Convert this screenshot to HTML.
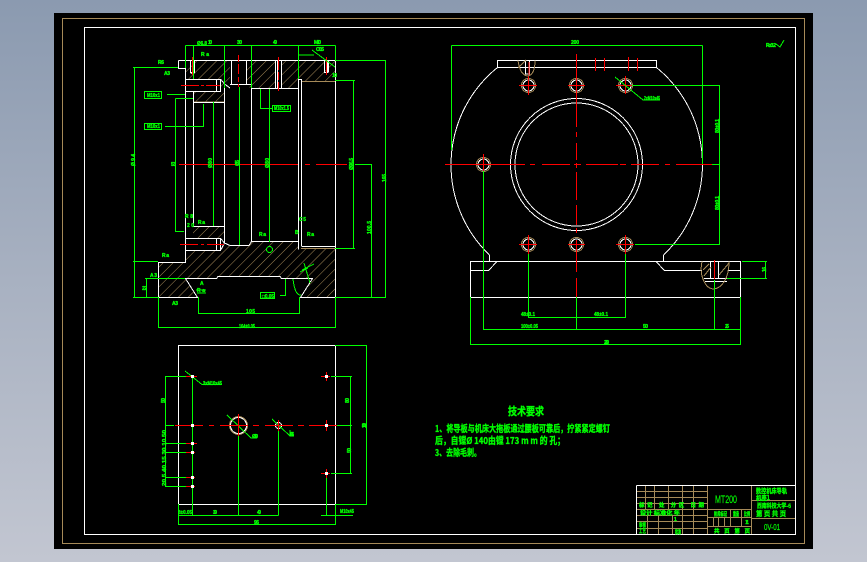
<!DOCTYPE html>
<html><head><meta charset="utf-8">
<style>
html,body{margin:0;padding:0;width:867px;height:562px;overflow:hidden;background:linear-gradient(180deg,#8b9ab0 0%,#a8b1c1 50%,#c2c6d1 100%)}
svg{position:absolute;left:0;top:0}
.g{stroke:#0f0;fill:none;stroke-width:1}
.w{stroke:#fff;fill:none;stroke-width:1}
.r{stroke:#f00;fill:none;stroke-width:1}
.b{stroke:#a68a58;fill:none;stroke-width:1}
text{font-family:"Liberation Sans","Noto Sans CJK SC",sans-serif;fill:#0f0;stroke:#0f0;stroke-width:.35;font-weight:bold;font-size:5px}
.c{font-family:"Noto Sans CJK SC","WenQuanYi Zen Hei",sans-serif;font-weight:bold}
</style></head><body>
<svg width="867" height="562" viewBox="0 0 867 562" shape-rendering="crispEdges">
<defs>
<pattern id="h" width="7" height="7" patternUnits="userSpaceOnUse" patternTransform="rotate(45)">
<line x1="0" y1="0" x2="0" y2="7" stroke="#a68a58" stroke-width="1"/>
</pattern>
</defs>
<rect x="54" y="13" width="759" height="536" fill="#000"/>
<rect x="62.5" y="18.5" width="742" height="525" class="b"/>
<rect x="84.5" y="27.5" width="711" height="507" class="w"/>

<!-- hatch -->
<g fill="url(#h)" stroke="none">
<polygon points="185,68 196,60 230,60 230,84 224,88 224,102 193,102 193,92 220,92 220,79 185,79"/>
<polygon points="247,60 276,60 276,89 251,89 247,84"/>
<polygon points="282,60 335,60 335,81 301,81 301,79 298,79 298,89 282,89"/>
<polygon points="193,238 193,227 224,227 224,238"/>
<polygon points="159,262 185,262 185,250 220,250 224,243 230,246 249,246 252,241 298,241 298,249 335,249 335,297 301,297 312,279 281,279 280,276 218,276 216,279 185,279 197,297 159,297"/>
</g>
<g class="b">
<path d="M185 79.500H216M185 91.500H220M193 102H224M185 238.500H220M185 250.500H220M301 81.500H335M301 248.500H335"/>
</g>

<!-- left view white -->
<g class="w">
<path d="M178.500 60.500V68.500H185.500M178.500 60.500H335.500V297.500H300.500L312.500 278.500H281.500L280 276.500H218L216.500 278.500H185.500L197.500 297.500H158.500V262.500H185.500V68"/>
<path d="M193.500 91.500V102.500H224.500V88"/>
<path d="M185.500 79.500H220.500V91.500H185.500M216.500 79.500V91.500"/>
<path d="M220.500 79L224.500 84L230 88"/>
<path d="M231.500 60.500V84.500H246.500V60.500M230 84.500H251.500V88.500H298.500V79.500H301.500V246"/>
<path d="M251.500 88.500V241.500M224.500 102V243M193.500 102V226.500H224.500M185.500 226V262"/>
<path d="M275.500 60.500V88.500M277.500 60.500V88.500M281.500 60.500V88.500"/>
<path d="M190.500 60.500V72.500H194.500V60.500M190.500 72.500L192.500 74L194.500 72.500"/>
<path d="M324.500 60.500V72.500H327.500V60.500M328.500 60.500V72.500"/>
<path d="M185.500 238.500H220.500V250.500H185.500M216.500 238.500V250.500M220.500 238.500L224.500 243M220.500 250.500L224.500 243"/>
<path d="M224.500 243L230 245.500H249L251.500 241.500H298.500V249.500M298.500 89V241.500M301.500 246.500H335"/>
</g>

<!-- left view red -->
<g class="r">
<path d="M179 164.500H298M305 164.500H310M316 164.500H347"/>
<path d="M181 85.500H199M201 85.500H204M206 85.500H220"/>
<path d="M180 244.500H198M201 244.500H204M207 244.500H224"/>
<path d="M238.500 55V62M238.500 64V74M238.500 77V82M238.500 84V87"/>
<path d="M278.500 57V70M278.500 72V80M278.500 82V91"/>
<path d="M192.500 57V75M326.500 57V75"/>
</g>

<!-- left view green -->
<g class="g">
<path d="M185.500 45.500H335.500M185.500 45.500V68M193.500 45.500V79M224.500 45.500V88M251.500 45.500V88M298.500 45.500V79M335.500 45.500V60"/>
<path d="M335 60.500H386M385.500 60.500V297.500M335 297.500H386"/>
<path d="M335 80.500H355M353.500 80.500V248.500M335 248.500H355"/>
<path d="M355 164.500H371.500V297.500"/>
<path d="M133 67.500H178M134.500 67.500V297.500M133 297.500H158"/>
<path d="M175.500 98.500H193M175.500 98.500V231.500H184"/>
<path d="M167 94.500H185M165 126.500H203.500V104"/>
<path d="M213.500 102V226M239.500 87V245M269.500 89V242M260.500 89V108.500H272"/>
<rect x="144.500" y="91.500" width="17" height="7"/>
<rect x="144.500" y="123.500" width="17" height="6"/>
<rect x="272.500" y="105.500" width="18" height="6"/>
<rect x="260.500" y="292.500" width="14" height="6"/>
<circle cx="269.500" cy="249.500" r="3"/>
<path d="M133 261.500H158M145 278.500H185M146.500 278.500V297"/>
<path d="M198.500 297V313.500H299.500V297"/>
<path d="M158.500 297V327.500H335.500V297"/>
<path d="M280 295.500H285.500V279"/>
<path d="M293 279Q295 296 301 295"/>
<path d="M304 263L310 283M302 270L314 264M300 272L308 268"/>
<path d="M196 290L206 290M197 293L206 293"/>
<path d="M298 55H314M312 50L335 67"/>
</g>

<!-- right view -->
<g class="w">
<rect x="497.500" y="60.500" width="159" height="7"/>
<path d="M497.500 67.500A125 125 0 0 0 489.500 255M656.500 67.500A125 125 0 0 1 663.500 255"/>
<circle cx="576.500" cy="164.500" r="66"/>
<circle cx="576.500" cy="164.500" r="61.500"/>
<circle cx="528.500" cy="85.500" r="5.500"/><circle cx="576.500" cy="85.500" r="5.500"/><circle cx="625.500" cy="85.500" r="5.500"/>
<circle cx="483.500" cy="164.500" r="5.500"/>
<circle cx="528.500" cy="244.500" r="5.500"/><circle cx="576.500" cy="244.500" r="5.500"/><circle cx="625.500" cy="244.500" r="5.500"/>
<rect x="470.500" y="261.500" width="270" height="36"/>
<path d="M470.500 270.500H488.500L497 261.500M489.500 255V261M663.500 255V261M656 261.500L664.500 270.500H702M728 270.500H740"/>
<path d="M525.500 60.500V74H529.500V60.500"/>
<path d="M710.500 261.500V278.500M714.500 261.500V278.500M718.500 261.500V278.500M704 278.500H727M705 281.500H727"/>
</g>
<g class="b">
<circle cx="528.500" cy="85.500" r="7"/><circle cx="576.500" cy="85.500" r="7"/><circle cx="625.500" cy="85.500" r="7"/>
<circle cx="483.500" cy="164.500" r="7"/>
<circle cx="528.500" cy="244.500" r="7"/><circle cx="576.500" cy="244.500" r="7"/><circle cx="625.500" cy="244.500" r="7"/>
<path d="M518 60.500Q520 75 527.500 76Q535 75 535 60.500M518 68L526 60M702 261.500C699 275 705 289 714 289C721 288 729 280 729 261.500M704 276L711 267M719 275L729 263M703 270L709 264"/>
</g>
<g class="r">
<path d="M445 164.500H515M497 164.500H525M530 164.500H535M542 164.500H570M574 164.500H581M586 164.500H618M620 164.500H626M631 164.500H659M665 164.500H670M676 164.500H712"/>
<path d="M576.500 54V127M576.500 132V137M576.500 143V160M576.500 163V168M576.500 172V200M576.500 205V225M576.500 228V233M576.500 240V272M576.500 278V297"/>
<path d="M595.500 58V71M604.500 58V71M628.500 57V71M637.500 58V71"/>
<path d="M519 85.500H537M528.500 76V95M568 85.500H585M576.500 77V94M616 85.500H634M625.500 76V94"/>
<path d="M474 164.500H490M483.500 154V174"/>
<path d="M519 244.500H537M528.500 235V254M568 244.500H585M616 244.500H634M625.500 235V254"/>
<path d="M714.500 260V279M529 62V75"/>
</g>
<g class="g">
<path d="M451.500 45.500H702.500M451.500 45.500V150M702.500 45.500V164"/>
<path d="M632 85.500H720M719.500 85.500V244.500M712 164.500H720M635 244.500H720"/>
<path d="M483.500 171V329.500H740.500"/>
<path d="M470.500 297V344.500H740.500V297"/>
<path d="M528.500 254V317.500H625.500V254"/>
<path d="M576.500 297V329M714.500 280V329"/>
<path d="M742 261.500H767M727 278.500H767M765.500 261.500V278.500"/>
<path d="M615 77L643 100H660"/>
<path d="M776 44L780 47L784 40"/>
</g>

<!-- plan view -->
<g class="w"><rect x="178.500" y="345.500" width="157" height="159"/>
<circle cx="238.500" cy="425.500" r="8"/><circle cx="278.500" cy="425.500" r="3"/></g>
<g class="b"><circle cx="238.500" cy="425.500" r="9"/></g>
<g class="g">
<path d="M335 345.500H367M366.500 345.500V504.500M335 504.500H367"/>
<path d="M331 376.500H352M350.500 376.500V473.500M337 425.500H352M331 473.500H352"/>
<path d="M165.500 376.500V486.500M165 376.500H190M165 425.500H174M165 443.500H188M165 452.500H188M165 477.500H188M165 486.500H188"/>
<path d="M192.500 376V515.500M238.500 436V515.500M278.500 430V515.500M326.500 478V515.500"/>
<path d="M178.500 504V524.500H335.500V504M178.500 515.500H278.500M321 515.500H353"/>
<path d="M185 371L202 384.500H222M227 415L251 438H257M272 419L290 436H294M290 430V436"/>
</g>
<g class="r">
<path d="M175 425.500H203M209 425.500H214M220 425.500H248M253 425.500H259M265 425.500H293M298 425.500H304M309 425.500H337"/>
<path d="M238.500 414V436M278.500 420V431M326.500 420V431M186 376.500H197M321 376.500H330M326.500 372V381M186 443.500H197M186 452.500H195M186 477.500H195M186 486.500H195M321 473.500H330M326.500 469V478"/>
</g>
<g fill="#fff" stroke="none">
<rect x="191" y="375" width="3" height="3"/><rect x="325" y="375" width="3" height="3"/><rect x="191" y="424" width="3" height="3"/><rect x="325" y="424" width="3" height="3"/>
<rect x="191" y="442" width="3" height="3"/><rect x="191" y="451" width="3" height="3"/><rect x="191" y="476" width="3" height="3"/><rect x="191" y="485" width="3" height="3"/><rect x="325" y="472" width="3" height="3"/>
</g>

<!-- title block -->
<g class="b">
<path d="M636 491.500H707M636 497.500H707M636 503.500H707M636 509.500H707M636 515.500H707M636 521.500H707M636 528.500H707"/>
<path d="M645.500 486V509M654.500 486V509M668.500 486V509M682.500 486V534M693.500 486V534M707.500 486V534"/>
<path d="M647.500 515V534M658.500 515V534M672.500 515V534"/>
<path d="M751.500 486V534M707 509.500H751M707 517.500H751M707 526.500H751M751 500.500H795M751 518.500H795"/>
<path d="M730.500 509V526M741.500 509V526M713.500 517V526M718.500 517V526M724.500 517V526"/>
</g>
<path d="M636.500 485.500H795.500M636.500 485.500V534" class="w"/>

<!-- dimension text -->
<text x="197" y="45" textLength="10" lengthAdjust="spacingAndGlyphs">Ø6.8</text>
<text x="208" y="44" textLength="4">10</text>
<text x="237" y="44" textLength="5">30</text>
<text x="273" y="44" textLength="4">40</text>
<text x="314" y="44" textLength="7">M10</text>
<text x="316" y="51" textLength="8">C0.5</text>
<text x="201" y="56" textLength="8">Ra</text>
<text x="158" y="64" textLength="6">R6</text>
<text x="164" y="75" textLength="6">A3</text>
<text x="147" y="97" textLength="13" lengthAdjust="spacingAndGlyphs">M10x1</text>
<text x="147" y="128" textLength="13" lengthAdjust="spacingAndGlyphs">M10x1</text>
<text x="274" y="110" textLength="15" lengthAdjust="spacingAndGlyphs">M10x1.5</text>
<text x="332" y="77" textLength="5">10</text>
<text x="171" y="166" textLength="5">53</text>
<text x="0" y="0" transform="translate(135,166) rotate(-90)" textLength="12">Ø94</text>
<text x="0" y="0" transform="translate(212,168) rotate(-90)" textLength="10">Ø80</text>
<text x="0" y="0" transform="translate(239,166) rotate(-90)" textLength="6">Ø5</text>
<text x="0" y="0" transform="translate(269,168) rotate(-90)" textLength="10">Ø80</text>
<text x="0" y="0" transform="translate(353,170) rotate(-90)" textLength="12">Ø96.5</text>
<text x="0" y="0" transform="translate(386,182) rotate(-90)" textLength="8">165</text>
<text x="0" y="0" transform="translate(371,234) rotate(-90)" textLength="13">100.5</text>
<text x="185" y="218" textLength="8">R8</text>
<text x="187" y="227" textLength="7">20</text>
<text x="198" y="224" textLength="7">Ra</text>
<text x="259" y="236" textLength="7">Ra</text>
<text x="295" y="234" textLength="7">B</text>
<text x="299" y="221" textLength="7">C5</text>
<text x="307" y="236" textLength="7">Ra</text>
<text x="162" y="257" textLength="7">Ra</text>
<text x="150" y="277" textLength="7">A3</text>
<text x="142" y="290" textLength="5">22</text>
<text x="172" y="305" textLength="6">A3</text>
<text x="197" y="292" textLength="8">Ra</text>
<text x="200" y="285" textLength="8">A</text>
<text x="262" y="298" textLength="12" lengthAdjust="spacingAndGlyphs">□0.05</text>
<text x="246" y="313" textLength="9">105</text>
<text x="239" y="328" textLength="16" lengthAdjust="spacingAndGlyphs">164±0.05</text>
<text x="571" y="44" textLength="8">200</text>
<text x="644" y="100" textLength="16" lengthAdjust="spacingAndGlyphs">2xM10x45</text>
<text x="766" y="47" textLength="10">Rz3.2</text>
<text x="0" y="0" transform="translate(719,133) rotate(-90)" textLength="14">80±0.1</text>
<text x="0" y="0" transform="translate(719,210) rotate(-90)" textLength="14">80±0.1</text>
<text x="521" y="316" textLength="14" lengthAdjust="spacingAndGlyphs">48±0.1</text>
<text x="594" y="316" textLength="14" lengthAdjust="spacingAndGlyphs">48±0.1</text>
<text x="521" y="328" textLength="17" lengthAdjust="spacingAndGlyphs">100±0.05</text>
<text x="643" y="328" textLength="5">50</text>
<text x="725" y="328" textLength="4">25</text>
<text x="604" y="344" textLength="5">230</text>
<text x="0" y="0" transform="translate(766,272) rotate(-90)" textLength="5">16</text>
<text x="203" y="385" textLength="19" lengthAdjust="spacingAndGlyphs">3xM10x45</text>
<text x="0" y="0" transform="translate(165,403) rotate(-90)" textLength="5">50</text>
<text x="0" y="0" transform="translate(166,486) rotate(-90)" textLength="56" lengthAdjust="spacingAndGlyphs">20 5 40 15 30 10 50</text>
<text x="252" y="438" textLength="6">Ø30</text>
<text x="290" y="436" textLength="4">R5</text>
<text x="178" y="514" textLength="14" lengthAdjust="spacingAndGlyphs">8±0.05</text>
<text x="213" y="514" textLength="4">30</text>
<text x="257" y="514" textLength="4">40</text>
<text x="340" y="513" textLength="14" lengthAdjust="spacingAndGlyphs">M10x45</text>
<text x="254" y="524" textLength="5">96</text>
<text x="0" y="0" transform="translate(349,403) rotate(-90)" textLength="5">80</text>
<text x="0" y="0" transform="translate(351,453) rotate(-90)" textLength="5">50</text>
<text x="0" y="0" transform="translate(366,428) rotate(-90)" textLength="5">100</text>

<!-- tech requirements -->
<text class="c" x="508" y="415" style="font-size:11px" textLength="36" lengthAdjust="spacingAndGlyphs">技术要求</text>
<text class="c" x="435" y="432" style="font-size:9.500px" textLength="175" lengthAdjust="spacingAndGlyphs">1、将导板与机床大拖板通过腰板可靠后，拧紧紧定螺钉</text>
<text class="c" x="435" y="444" style="font-size:9.500px" textLength="130" lengthAdjust="spacingAndGlyphs">后，自镗Ø 140由镗 173 m m 的 孔；</text>
<text class="c" x="435" y="456" style="font-size:9.500px" textLength="46" lengthAdjust="spacingAndGlyphs">3、去除毛刺。</text>

<!-- title text -->
<text x="715" y="503" style="font-size:11px;font-weight:normal;stroke-width:.2" textLength="22" lengthAdjust="spacingAndGlyphs">MT200</text>
<text class="c" x="756" y="493" style="font-size:6.500px" textLength="31" lengthAdjust="spacingAndGlyphs">数控机床导轨</text>
<text class="c" x="756" y="500" style="font-size:6.500px" textLength="14" lengthAdjust="spacingAndGlyphs">机座1</text>
<text class="c" x="757" y="508" style="font-size:6px" textLength="34" lengthAdjust="spacingAndGlyphs">西南科技大学-6</text>
<text class="c" x="756" y="516" style="font-size:7px" textLength="30" lengthAdjust="spacingAndGlyphs">第 页 共 页</text>
<text x="764" y="530" style="font-size:8px;font-weight:normal;stroke-width:.2" textLength="16" lengthAdjust="spacingAndGlyphs">0V-01</text>
<text class="c" x="639" y="507" style="font-size:5.500px" textLength="65" lengthAdjust="spacing">标记 处 分区 日期</text>
<text class="c" x="640" y="515" style="font-size:5.500px" textLength="40" lengthAdjust="spacingAndGlyphs">设计 标准化 年</text>
<text class="c" x="639" y="527" style="font-size:5.500px" textLength="7" lengthAdjust="spacingAndGlyphs">审核</text>
<text class="c" x="639" y="533" style="font-size:5.500px" textLength="7" lengthAdjust="spacingAndGlyphs">工艺</text>
<text class="c" x="675" y="534" style="font-size:5.500px" textLength="6" lengthAdjust="spacingAndGlyphs">批准</text>
<text x="674" y="521" textLength="4">1</text>
<text class="c" x="714" y="516" style="font-size:5.500px" textLength="13" lengthAdjust="spacingAndGlyphs">阶段标记</text>
<text class="c" x="733" y="516" style="font-size:5.500px" textLength="6" lengthAdjust="spacingAndGlyphs">重量</text>
<text class="c" x="744" y="516" style="font-size:5.500px" textLength="6" lengthAdjust="spacingAndGlyphs">比例</text>
<text x="745" y="524" textLength="4" style="font-weight:normal">1:1</text>
<text class="c" x="714" y="533" style="font-size:5.500px" textLength="36" lengthAdjust="spacing">共 页 第 页</text>
</svg>
</body></html>
